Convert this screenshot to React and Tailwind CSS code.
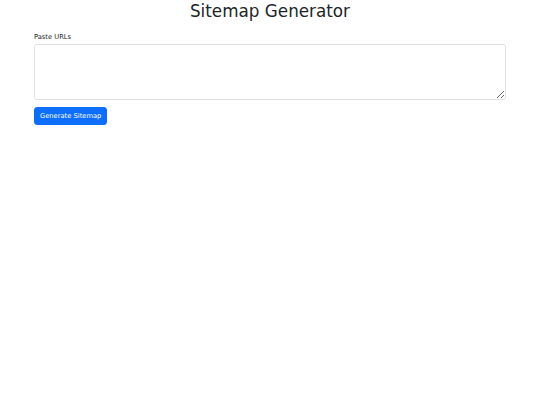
import React from 'react';

const App = () => {
  return (
    <div className="min-h-[405px] bg-white text-[#212529] font-['DejaVu_Sans',sans-serif]">
      <div className="px-[34px]">
        <h1 className="text-center text-[16.8px] leading-[1.2] font-normal pt-[1px]">Sitemap Generator</h1>
        <div className="mt-[11px]">
          <label htmlFor="urls" className="block text-[6.72px] leading-[1.5] mb-[2px]">
            Paste URLs
          </label>
          <textarea
            id="urls"
            rows="3"
            className="block w-full h-[56px] border border-[#dee2e6] rounded-[3px] bg-white px-[5px] py-[2.5px] text-[6.72px] outline-none"
          ></textarea>
        </div>
        <button
          type="submit"
          className="mt-[7px] bg-[#0d6efd] text-white text-[6.72px] leading-[1.5] px-[5px] py-[3px] rounded-[3px] border border-[#0d6efd]"
        >
          Generate Sitemap
        </button>
      </div>
    </div>
  );
};

export default App;
